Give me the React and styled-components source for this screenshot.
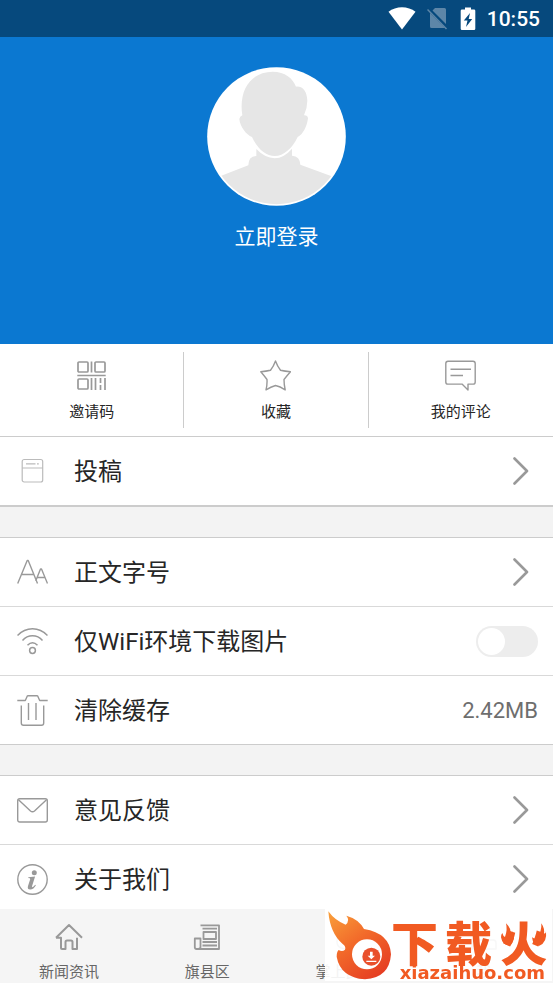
import styled, { createGlobalStyle } from 'styled-components';

const GlobalStyle = createGlobalStyle`
  * {
    box-sizing: border-box;
  }

  body {
    margin: 0;
    font-family: Roboto, 'Noto Sans CJK SC', sans-serif;
    color: #262626;
    background: #f3f3f3;
  }

  svg {
    display: block;
  }

  button {
    font: inherit;
    color: inherit;
    background: none;
    border: 0;
    padding: 0;
    cursor: pointer;
  }
`;

const Screen = styled.div`
  display: flex;
  flex-direction: column;
  height: 100vh;
`;

const StatusBar = styled.div`
  display: flex;
  flex: none;
  align-items: center;
  justify-content: flex-end;
  gap: 11px;
  height: 37px;
  padding: 0 13px;
  background: #06497d;
  color: #fff;
`;

const Clock = styled.time`
  font-size: 21px;
  font-weight: 500;
  line-height: 36px;
`;

const Content = styled.main`
  flex: 1;
  min-height: 0;
  overflow-y: auto;
  scrollbar-width: none;
`;

const Profile = styled.header`
  display: flex;
  justify-content: center;
  height: 307px;
  padding-top: 30px;
  background: #0b78d1;
`;

const Login = styled.button`
  display: flex;
  flex-direction: column;
  align-items: center;
  align-self: flex-start;
  gap: 16px;
  color: #fff;
  font-size: 21px;
  line-height: 30px;
`;

const Actions = styled.nav`
  display: grid;
  grid-template-columns: repeat(3, 1fr);
  padding: 8px 0;
  background: #fff;
  border-bottom: 1px solid #ccc;
`;

const Action = styled.button`
  display: flex;
  flex-direction: column;
  align-items: center;
  gap: 10px;
  height: 76px;
  padding-top: 8px;
  font-size: 15px;
  line-height: 22px;

  &:not(:last-child) {
    border-right: 1px solid #ccc;
  }
`;

const Section = styled.section`
  background: #fff;
  border-top: ${({ $first }) => ($first ? 0 : '1px solid #ccc')};
  border-bottom: ${({ $first }) => ($first ? '2px' : '1px')} solid #ccc;

  & + & {
    margin-top: 30px;
  }
`;

const Row = styled.button`
  display: flex;
  align-items: center;
  gap: 26px;
  width: 100%;
  height: 68px;
  padding: 0 15px 0 17px;
  font-size: 24px;
  line-height: 36px;
  text-align: left;

  & + & {
    height: 69px;
    border-top: 1px solid #d9d9d9;
  }
`;

const RowLabel = styled.span`
  flex: 1;
  padding-top: 2px;
`;

const Value = styled.span`
  padding-top: 2px;
  color: #6e6e6e;
  font-size: 22px;
`;

const Switch = styled.input`
  appearance: none;
  display: flex;
  width: 62px;
  height: 31px;
  margin: 0;
  padding: 2px;
  border-radius: 16px;
  background: #ededed;
  cursor: pointer;

  &::before {
    content: '';
    width: 27px;
    height: 27px;
    border-radius: 50%;
    background: #fff;
  }

  &:checked {
    justify-content: flex-end;
    background: #0b78d1;
  }
`;

const TabBar = styled.nav`
  display: grid;
  flex: none;
  grid-template-columns: repeat(4, 1fr);
  height: 74px;
  background: #f5f5f5;
`;

const Tab = styled.a`
  display: flex;
  flex-direction: column;
  align-items: center;
  gap: 10px;
  padding-top: 14px;
  color: #666;
  font-size: 15px;
  line-height: 22px;
  text-decoration: none;
`;

const Watermark = styled.div`
  position: fixed;
  right: 1px;
  bottom: 2px;
  background: rgba(255, 255, 255, 0.92);
`;

const Icon = ({ width = 31, height = 31, children, ...rest }) => (
  <svg
    width={width}
    height={height}
    viewBox={`0 0 ${width} ${height}`}
    fill="none"
    stroke="#999"
    strokeWidth="1.4"
    strokeLinejoin="round"
    aria-hidden="true"
    {...rest}
  >
    {children}
  </svg>
);

const StatusWifi = () => (
  <Icon width={28} height={23} stroke="none" fill="#fff">
    <path d="M.5 4.8C8-1.2 20-1.2 27.5 4.8L14 22.5z" />
  </Icon>
);

const NoSim = () => (
  <Icon width={22} height={23} stroke="none" fill="#5d86a8">
    <path d="M8 1h9.5q1.500 0 1.500 1.500V17L5.500 3.500zM3 6l15 15H4.500Q3 21 3 19.500z" />
    <path d="M.5 2.500L19.500 22" stroke="#5d86a8" strokeWidth="1.500" />
  </Icon>
);

const Battery = () => (
  <Icon width={16} height={24} stroke="none" fill="#fff">
    <path d="M5 .5h6v2h3q1.300 0 1.300 1.300v18q0 1.300-1.300 1.300H2Q.7 23.100.7 21.800v-18Q.7 2.500 2 2.500h3z" />
    <path d="M10 6L3.800 13.500h3.700L6 20l6.200-8H8.700z" fill="#06497d" />
  </Icon>
);

const Avatar = () => (
  <svg width="139" height="139" viewBox="51 36 417 417" aria-hidden="true">
    <clipPath id="face">
      <circle cx="259.500" cy="244.500" r="203" />
    </clipPath>
    <circle cx="259.500" cy="244.500" r="208" fill="#fff" />
    <g fill="#e6e6e6" clipPath="url(#face)">
      <path d="M199 282Q225 309 254 310Q282 309 306 281V302Q330 304 331 329L425 364V460H90V364L175 331Q175 304 199 303Z" />
      <path
        d="M248 50C285 50 309 70 318 95C340 93 351 112 352 137Q352 160 342 181Q353 180 354 190C351 214 339 239 323 246C306 281 281 303 254 303C228 303 202 281 186 246C169 239 150 216 148 192Q149 184 157 181C145 105 183 50 248 50Z"
        stroke="#fff"
        strokeWidth="6"
        paintOrder="stroke"
      />
    </g>
  </svg>
);

const QrCode = () => (
  <Icon strokeWidth="1.700">
    <rect x="2" y="2" width="10" height="10" rx="1" />
    <rect x="19" y="2" width="10" height="10" rx="1" />
    <rect x="2" y="19" width="10" height="10" rx="1" />
    <path d="M15.500 1.500v11M1.300 15.500h28.400M15.500 18v12M19.500 18v12M24.500 18v5M24.500 25v5M29 18v12" />
  </Icon>
);

const Star = () => (
  <Icon>
    <path d="M15.500 1Q17.500 6.500 20.500 10.300Q25 11.300 30.500 11.800Q26.800 16 24 19.500Q24 24.500 25.200 29.800Q20 26.500 15.500 25.500Q11 26.700 6 29.800Q7.300 24.500 7 19.500Q4 15.500.8 11.800Q6 11.300 10.500 10.300Q13.500 6.500 15.500 1z" />
  </Icon>
);

const Comment = () => (
  <Icon>
    <path d="M3 1.200h25q2.200 0 2.200 2.200v18.500q0 2.200-2.200 2.200h-5v6L17 24.100H3Q.8 24.100.8 21.900V3.400Q.8 1.200 3 1.200zM5.500 9.300h20.500M5.500 15.500H18" />
  </Icon>
);

const Draft = () => (
  <Icon stroke="#bbb" strokeWidth="1.200">
    <rect x="5.200" y="3.500" width="20.500" height="22.500" rx="2" />
    <path d="M5 12h21M9 7.800h9.500M20 7.800h1.800" />
  </Icon>
);

const FontSize = () => (
  <Icon>
    <path d="M.7 26.500L10.200 3.500h1L20.500 26.500M4.700 17.500h12.500M18.700 24L23.500 12h1L30.500 26.500M20.500 20.500h7.500" />
  </Icon>
);

const Wifi = () => (
  <Icon strokeWidth="1.500">
    <path d="M.5 9.500C9 .5 22 .5 30.500 9.500M5.500 14.500C11 8.300 20 8.300 25.500 14.500M10.500 19.300Q15.500 14.200 20.500 19.300" />
    <circle cx="15.500" cy="24.500" r="2.900" />
  </Icon>
);

const Trash = () => (
  <Icon>
    <path d="M.3 5.500h8L10.200 1.200q.3-.5.8-.5h9q.5 0 .8.500L22.700 5.500h8M4.300 10.500v17.500q0 2.200 2.200 2.200h18q2.200 0 2.200-2.200V10.500M11.500 8v17M19 8v17" />
  </Icon>
);

const Mail = () => (
  <Icon>
    <rect x=".7" y="3.800" width="29.600" height="23.200" rx="2" />
    <path d="M1.500 4.800L13.500 16q2 1.700 4 0L29.500 4.800" />
  </Icon>
);

const Info = () => (
  <Icon>
    <circle cx="15.500" cy="15.500" r="14.700" />
    <circle cx="17.300" cy="8.700" r="2.500" fill="#999" stroke="none" />
    <path
      d="M11.300 13.200l6.800-.7-3 9.500q-.3 1.500.8 1 1.300-.8 2.200-2.200l.8.500q-2.200 4.200-5.700 4.200-3.200 0-2.200-3.500l2.200-6.800q.3-1.100-1.900-1.200z"
      fill="#999"
      stroke="none"
    />
  </Icon>
);

const Chevron = () => (
  <Icon width={26} height={28} strokeWidth="2.600" strokeLinecap="round">
    <path d="M2.500 1.500L15 14L2.500 26.500" />
  </Icon>
);

const Home = () => (
  <Icon width={28} height={28} strokeWidth="2">
    <path d="M1 14.800L14 2L27 14.800M1 14.800H6V25q0 1 1 1h3.500V19q0-1.500 1.500-1.500h4q1.500 0 1.500 1.500v7H22V14.800" />
  </Icon>
);

const Newspaper = () => (
  <Icon width={28} height={28} strokeWidth="1.800">
    <path d="M7.500 2.300H26V26H3.500Q1.800 26 1.800 24.300V15.500H7.500V24Q7.500 26 5 26M9.500 5.700h14.500M9.500 19h14.500M9.500 22.500h14.500" />
    <rect x="10.500" y="9" width="12.500" height="7" />
  </Icon>
);

const Flame = () => (
  <Icon width={28} height={28}>
    <path d="M14 2q2 6 6 10 6 14-6 14Q2 25 6 14l3 3Q8 8 14 2z" />
  </Icon>
);

const User = () => (
  <Icon width={28} height={28}>
    <circle cx="14" cy="8" r="6" />
    <path d="M2 26v-6q0-3 3-3h18q3 0 3 3v6z" />
  </Icon>
);

const SiteLogo = () => (
  <svg width="227" height="72" viewBox="45 27 681 216" role="img" aria-label="下载火 xiazaihuo.com">
    <defs>
      <linearGradient id="fire" x1="0" y1="0" x2="0.700" y2="1">
        <stop offset="0" stopColor="#f9a03a" />
        <stop offset="0.500" stopColor="#f26a2a" />
        <stop offset="1" stopColor="#e63f23" />
      </linearGradient>
    </defs>
    <path
      d="M55 34Q75 62 107 74Q121 61 109 47Q146 57 162 87Q240 100 243 163Q238 234 165 238Q91 232 80 170Q80 155 86 150Q97 156 105 149Q109 140 98 132Q60 100 55 34Z"
      fill="url(#fire)"
    />
    <circle cx="171" cy="163" r="45" fill="#fff" />
    <circle cx="184" cy="170" r="27" fill="#e9502c" />
    <path d="M180 155h8v12h7l-11 11-11-11h7zM169 182h30v4h-30z" fill="#fff" />
    <g fill="#f15a22">
      <text
        x="243 405 571"
        y="182"
        fontSize="141"
        fontWeight="900"
        fontFamily="'Noto Sans CJK SC', sans-serif"
      >
        下载火
      </text>
      <text x="269" y="236" fontSize="54" fontWeight="700" fontFamily="'DejaVu Sans', sans-serif">
        xiazaihuo.com
      </text>
      <path d="M588 70Q607 88 600 105Q608 101 607 94Q620 121 599 136Q578 138 573 112Q573 103 577 99Q579 108 585 111Q593 89 588 70Z" />
      <path d="M694 70Q706 88 701 102Q709 100 708 94Q712 128 688 137Q668 134 666 112Q672 117 680 116Q696 94 694 70Z" />
    </g>
  </svg>
);

const actions = [
  { label: '邀请码', icon: QrCode },
  { label: '收藏', icon: Star },
  { label: '我的评论', icon: Comment },
];

const tabs = [
  { label: '新闻资讯', icon: Home },
  { label: '旗县区', icon: Newspaper },
  { label: '掌上民意', icon: Flame },
  { label: '我', icon: User },
];

const LinkRow = ({ icon: RowIcon, label, value }) => (
  <Row type="button">
    <RowIcon />
    <RowLabel>{label}</RowLabel>
    {value ? <Value>{value}</Value> : <Chevron />}
  </Row>
);

const App = () => (
  <Screen>
    <GlobalStyle />
    <StatusBar>
      <StatusWifi />
      <NoSim />
      <Battery />
      <Clock>10:55</Clock>
    </StatusBar>
    <Content>
      <Profile>
        <Login type="button">
          <Avatar />
          立即登录
        </Login>
      </Profile>
      <Actions>
        {actions.map(({ label, icon: ActionIcon }) => (
          <Action type="button" key={label}>
            <ActionIcon />
            {label}
          </Action>
        ))}
      </Actions>
      <Section $first>
        <LinkRow icon={Draft} label="投稿" />
      </Section>
      <Section>
        <LinkRow icon={FontSize} label="正文字号" />
        <Row as="label" htmlFor="wifi-only">
          <Wifi />
          <RowLabel>仅WiFi环境下载图片</RowLabel>
          <Switch type="checkbox" id="wifi-only" />
        </Row>
        <LinkRow icon={Trash} label="清除缓存" value="2.42MB" />
      </Section>
      <Section>
        <LinkRow icon={Mail} label="意见反馈" />
        <LinkRow icon={Info} label="关于我们" />
      </Section>
    </Content>
    <TabBar>
      {tabs.map(({ label, icon: TabIcon }) => (
        <Tab href="#" key={label}>
          <TabIcon />
          {label}
        </Tab>
      ))}
    </TabBar>
    <Watermark>
      <SiteLogo />
    </Watermark>
  </Screen>
);

export default App;
